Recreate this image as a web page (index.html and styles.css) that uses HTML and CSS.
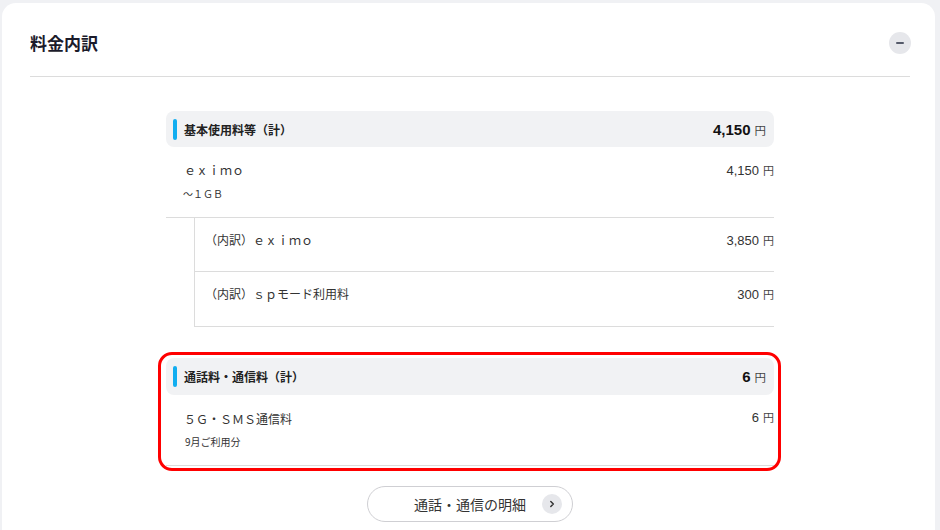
FILE: index.html
```html
<!DOCTYPE html>
<html lang="ja">
<head>
<meta charset="utf-8">
<title>料金内訳</title>
<link rel="stylesheet" href="styles.css">
</head>
<body>
<div class="card">
  <div class="card-head">
    <h2 class="card-title">料金内訳</h2>
    <button class="toggle" aria-label="閉じる"><span class="dash"></span></button>
  </div>
  <div class="content">
    <section class="group">
      <div class="group-head">
        <span class="bar"></span>
        <span class="group-name">基本使用料等（計）</span>
        <span class="amount amount-total"><span class="num">4,150</span><span class="yen">円</span></span>
      </div>
      <div class="item">
        <div class="item-text">
          <div class="item-name">ｅｘｉｍｏ</div>
          <div class="item-sub">〜１ＧＢ</div>
        </div>
        <span class="amount"><span class="num">4,150</span><span class="yen">円</span></span>
      </div>
      <div class="subitems">
        <div class="subitem">
          <span class="item-name">（内訳）ｅｘｉｍｏ</span>
          <span class="amount"><span class="num">3,850</span><span class="yen">円</span></span>
        </div>
        <div class="subitem">
          <span class="item-name">（内訳）ｓｐモード利用料</span>
          <span class="amount"><span class="num">300</span><span class="yen">円</span></span>
        </div>
      </div>
    </section>

    <section class="group group-highlight">
      <div class="group-head">
        <span class="bar"></span>
        <span class="group-name">通話料・通信料（計）</span>
        <span class="amount amount-total"><span class="num">6</span><span class="yen">円</span></span>
      </div>
      <div class="item item-last">
        <div class="item-text">
          <div class="item-name">５Ｇ・ＳＭＳ通信料</div>
          <div class="item-sub item-month">9月ご利用分</div>
        </div>
        <span class="amount amount-up"><span class="num">6</span><span class="yen">円</span></span>
      </div>
    </section>

    <div class="actions">
      <button class="detail-btn">
        <span class="detail-label">通話・通信の明細</span>
        <span class="chev">
          <svg width="8" height="8" viewBox="0 0 8 8"><path d="M2.8 1.5 L5.3 4 L2.8 6.5" fill="none" stroke="#333" stroke-width="1.5" stroke-linecap="round" stroke-linejoin="round"/></svg>
        </span>
      </button>
    </div>
  </div>
</div>
</body>
</html>
```
FILE: styles.css
```css
* { box-sizing: border-box; }
html, body { margin: 0; padding: 0; }
body {
  background: #f0f1f4;
  font-family: "Noto Sans CJK JP", "Noto Sans", sans-serif;
  color: #333;
  padding: 3px 5px 0 2px;
  height: 530px;
  overflow: hidden;
}
.card {
  background: #fff;
  border-radius: 14px;
  padding: 0 25px 0 28px;
  height: 600px;
}
.card-head {
  display: flex;
  align-items: center;
  justify-content: space-between;
  padding: 28px 0 21px;
  border-bottom: 1px solid #dcdcdc;
}
.card-title {
  margin: 0;
  font-size: 17px;
  line-height: 24px;
  font-weight: 700;
  color: #1b1b2b;
}
.toggle {
  width: 22px;
  height: 22px;
  border-radius: 50%;
  border: none;
  background: #e6e7eb;
  padding: 0;
  display: flex;
  align-items: center;
  justify-content: center;
  margin-right: -1px;
}
.dash {
  width: 8px;
  height: 2px;
  background: #555a6a;
  border-radius: 1px;
}
.content {
  width: 608px;
  margin: 34px auto 0;
}
.group-head {
  display: flex;
  align-items: center;
  height: 36px;
  background: #f1f2f4;
  border-radius: 8px;
  padding: 0 8px 0 7px;
}
.bar {
  width: 4px;
  height: 21px;
  border-radius: 2px;
  background: #12aef0;
  margin-right: 7px;
}
.group-name {
  font-size: 12px;
  font-weight: 700;
  color: #222;
  flex: 1;
}
.amount {
  display: flex;
  align-items: baseline;
  gap: 4px;
}
.num {
  font-family: "Liberation Sans", Arial, sans-serif;
  font-size: 13px;
  color: #333;
}
.yen {
  font-size: 11px;
  color: #444;
}
.amount-total .num {
  font-size: 15px;
  font-weight: 700;
  color: #111;
}
.amount-total .yen {
  font-size: 11.5px;
}
.item {
  display: flex;
  justify-content: space-between;
  align-items: flex-start;
  padding: 13px 0 15px 18px;
  border-bottom: 1px solid #dcdcdc;
}
.item-name {
  font-size: 12px;
  line-height: 20px;
  color: #333;
}
.item-sub {
  font-size: 10px;
  line-height: 16px;
  margin-top: 6px;
  margin-left: -1px;
  color: #333;
}
.item .amount {
  line-height: 20px;
}
.subitems {
  margin-left: 28px;
  border-left: 1px solid #dcdcdc;
}
.subitem {
  display: flex;
  justify-content: space-between;
  align-items: flex-start;
  height: 54px;
  padding: 12px 0 0 10px;
  border-bottom: 1px solid #dcdcdc;
}
.subitem:last-child { height: 55px; }
.subitem .amount { line-height: 20px; }
.group-highlight {
  position: relative;
  margin-top: 31px;
}
.group-highlight::after {
  content: "";
  position: absolute;
  top: -6px;
  bottom: -5px;
  left: -8px;
  right: -7px;
  border: 3px solid #f00;
  border-radius: 14px;
  pointer-events: none;
}
.group-highlight .group-head { height: 37px; }
.group-highlight .item { padding: 14px 0 15px 18px; }
.item-month {
  font-size: 10px;
  margin-top: 5px;
  margin-left: 1px;
}
.amount-up { margin-top: -2px; }
.actions {
  display: flex;
  justify-content: center;
  margin-top: 20px;
}
.detail-btn {
  position: relative;
  width: 206px;
  height: 36px;
  border: 1px solid #cfcfd3;
  border-radius: 18px;
  background: #fff;
  display: flex;
  align-items: center;
  justify-content: center;
  padding: 0;
  font-family: inherit;
}
.detail-label {
  font-size: 14px;
  color: #333;
}
.chev {
  position: absolute;
  right: 10px;
  top: 7px;
  width: 20px;
  height: 20px;
  border-radius: 50%;
  background: #e6e7eb;
  display: flex;
  align-items: center;
  justify-content: center;
}
```
